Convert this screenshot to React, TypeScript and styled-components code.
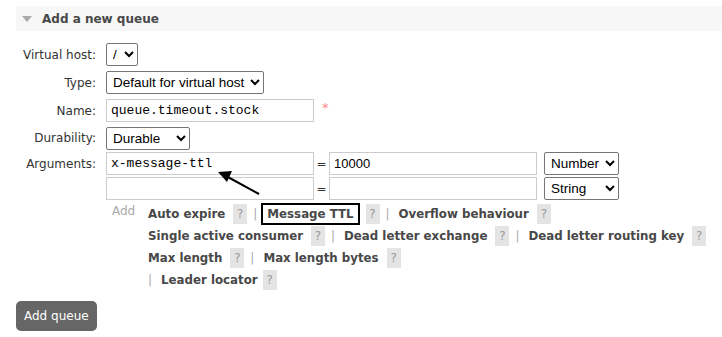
import React from 'react'
import styled, { createGlobalStyle } from 'styled-components'

const GlobalStyle = createGlobalStyle`
  body {
    margin: 0;
    background: #fff;
    font-family: 'DejaVu Sans', Verdana, sans-serif;
    color: #444;
  }
`

const Page = styled.div`
  position: relative;
  padding: 6px 0 0 16px;
`

const SectionHeader = styled.div`
  display: flex;
  align-items: center;
  height: 25px;
  background: #f7f7f7;
  padding-left: 6px;
  font-weight: bold;
  font-size: 12px;
  color: #484848;
`

const Triangle = styled.span`
  width: 0;
  height: 0;
  border-left: 5px solid transparent;
  border-right: 5px solid transparent;
  border-top: 6px solid #aaa;
  margin-right: 10px;
`

const Form = styled.div`
  display: grid;
  grid-template-columns: 80px auto;
  column-gap: 10px;
  margin-top: 10px;
  align-items: center;
`

const Label = styled.div<{ $top?: boolean }>`
  text-align: right;
  font-size: 12px;
  color: #333;
  white-space: nowrap;
  align-self: ${(p) => (p.$top ? 'start' : 'center')};
  padding-top: ${(p) => (p.$top ? '5px' : '0')};
`

const Field = styled.div<{ $h?: number }>`
  display: flex;
  align-items: center;
  height: ${(p) => p.$h ?? 27}px;
`

const Select = styled.select<{ $w: number }>`
  width: ${(p) => p.$w}px;
  height: 23px;
  font-family: 'Liberation Sans', Arial, sans-serif;
  font-size: 13.5px;
  color: #000;
  border: 1px solid #767676;
  border-radius: 2px;
  background: #fff;
  padding: 0 2px;
`

const TextInput = styled.input<{ $mono?: boolean }>`
  box-sizing: border-box;
  width: 208px;
  height: 23px;
  border: 1px solid #ccc;
  padding: 0 4px;
  font-family: ${(p) => (p.$mono ? "'Liberation Mono', 'Courier New', monospace" : "'Liberation Sans', Arial, sans-serif")};
  font-size: 13px;
  color: #000;
  outline: none;
`

const Required = styled.span`
  color: #f88;
  margin-left: 8px;
  font-size: 13px;
  align-self: flex-start;
  margin-top: 3px;
`

const ArgTable = styled.div`
  display: grid;
  grid-template-columns: 208px 15px 208px 74px;
  column-gap: 0;
  row-gap: 2px;
  align-items: center;

  & > select {
    margin-left: 7px;
  }
`

const Eq = styled.span`
  text-align: center;
  font-size: 12px;
  color: #333;
`

const AddRow = styled.div`
  display: flex;
  margin-top: 3px;
`

const AddLink = styled.span`
  flex: 0 0 36px;
  font-size: 12px;
  color: #aaa;
  padding-left: 6px;
  line-height: 16px;
`

const Keywords = styled.div`
  display: flex;
  flex-direction: column;
  white-space: nowrap;
`

const KeywordLine = styled.div`
  display: flex;
  align-items: center;
  height: 22px;
`

const Keyword = styled.span<{ $boxed?: boolean }>`
  flex-shrink: 0;
  font-weight: bold;
  font-size: 11.8px;
  color: #484848;
  line-height: 16px;
  padding: ${(p) => (p.$boxed ? '1px 4px' : '0')};
  border: ${(p) => (p.$boxed ? '2px solid #000' : 'none')};
  margin: ${(p) => (p.$boxed ? '0 -2px 0 -5px' : '0')};
`

const Help = styled.span<{ $tight?: boolean }>`
  flex-shrink: 0;
  display: inline-block;
  width: 14px;
  height: 20px;
  line-height: 20px;
  text-align: center;
  background: #e4e4e4;
  color: #999;
  font-size: 12px;
  margin-left: ${(p) => (p.$tight ? 5 : 8)}px;
  margin-right: 6px;
`

const Sep = styled.span`
  flex-shrink: 0;
  color: #aaa;
  font-size: 12px;
  margin-right: 9px;
`

const SubmitButton = styled.button`
  display: block;
  margin-top: 10px;
  height: 30px;
  padding: 0 8px;
  background: #666;
  color: #fff;
  border: none;
  border-radius: 5px;
  font-family: 'DejaVu Sans', Verdana, sans-serif;
  font-size: 12px;
`

const Arrow = styled.svg`
  position: absolute;
  left: 210px;
  top: 165px;
  overflow: visible;
`

type Item = { name: string; boxed?: boolean; tight?: boolean }

const lines: { lead?: boolean; items: Item[] }[] = [
  { items: [{ name: 'Auto expire' }, { name: 'Message TTL', boxed: true }, { name: 'Overflow behaviour' }] },
  { items: [{ name: 'Single active consumer' }, { name: 'Dead letter exchange' }, { name: 'Dead letter routing key' }] },
  { items: [{ name: 'Max length' }, { name: 'Max length bytes' }] },
  { lead: true, items: [{ name: 'Leader locator', tight: true }] },
]

export default function App() {
  return (
    <Page>
      <GlobalStyle />
      <SectionHeader>
        <Triangle />
        Add a new queue
      </SectionHeader>
      <Form>
        <Label>Virtual host:</Label>
        <Field>
          <Select $w={32} defaultValue="/">
            <option>/</option>
          </Select>
        </Field>
        <Label>Type:</Label>
        <Field $h={29}>
          <Select $w={158} defaultValue="Default for virtual host">
            <option>Default for virtual host</option>
            <option>Classic</option>
            <option>Quorum</option>
          </Select>
        </Field>
        <Label>Name:</Label>
        <Field>
          <TextInput $mono defaultValue="queue.timeout.stock" />
          <Required>*</Required>
        </Field>
        <Label>Durability:</Label>
        <Field $h={28}>
          <Select $w={84} defaultValue="Durable">
            <option>Durable</option>
            <option>Transient</option>
          </Select>
        </Field>
        <Label $top>Arguments:</Label>
        <div>
          <ArgTable>
            <TextInput $mono defaultValue="x-message-ttl" />
            <Eq>=</Eq>
            <TextInput defaultValue="10000" />
            <Select $w={75} defaultValue="Number">
              <option>String</option>
              <option>Number</option>
              <option>Boolean</option>
              <option>List</option>
            </Select>
            <TextInput $mono />
            <Eq>=</Eq>
            <TextInput />
            <Select $w={75} defaultValue="String">
              <option>String</option>
              <option>Number</option>
              <option>Boolean</option>
              <option>List</option>
            </Select>
          </ArgTable>
          <AddRow>
            <AddLink>Add</AddLink>
            <Keywords>
              {lines.map((line, i) => (
                <KeywordLine key={i}>
                  {line.lead && <Sep>|</Sep>}
                  {line.items.map((it, j) => (
                    <React.Fragment key={it.name}>
                      <Keyword $boxed={it.boxed}>{it.name}</Keyword>
                      <Help $tight={it.tight}>?</Help>
                      {j < line.items.length - 1 && <Sep>|</Sep>}
                    </React.Fragment>
                  ))}
                </KeywordLine>
              ))}
            </Keywords>
          </AddRow>
        </div>
      </Form>
      <SubmitButton>Add queue</SubmitButton>
      <Arrow width="60" height="40" viewBox="0 0 60 40">
        <line x1="49" y1="29" x2="16" y2="11" stroke="#000" strokeWidth="2" />
        <polygon points="8,7 22,6 17,17" fill="#000" />
      </Arrow>
    </Page>
  )
}
